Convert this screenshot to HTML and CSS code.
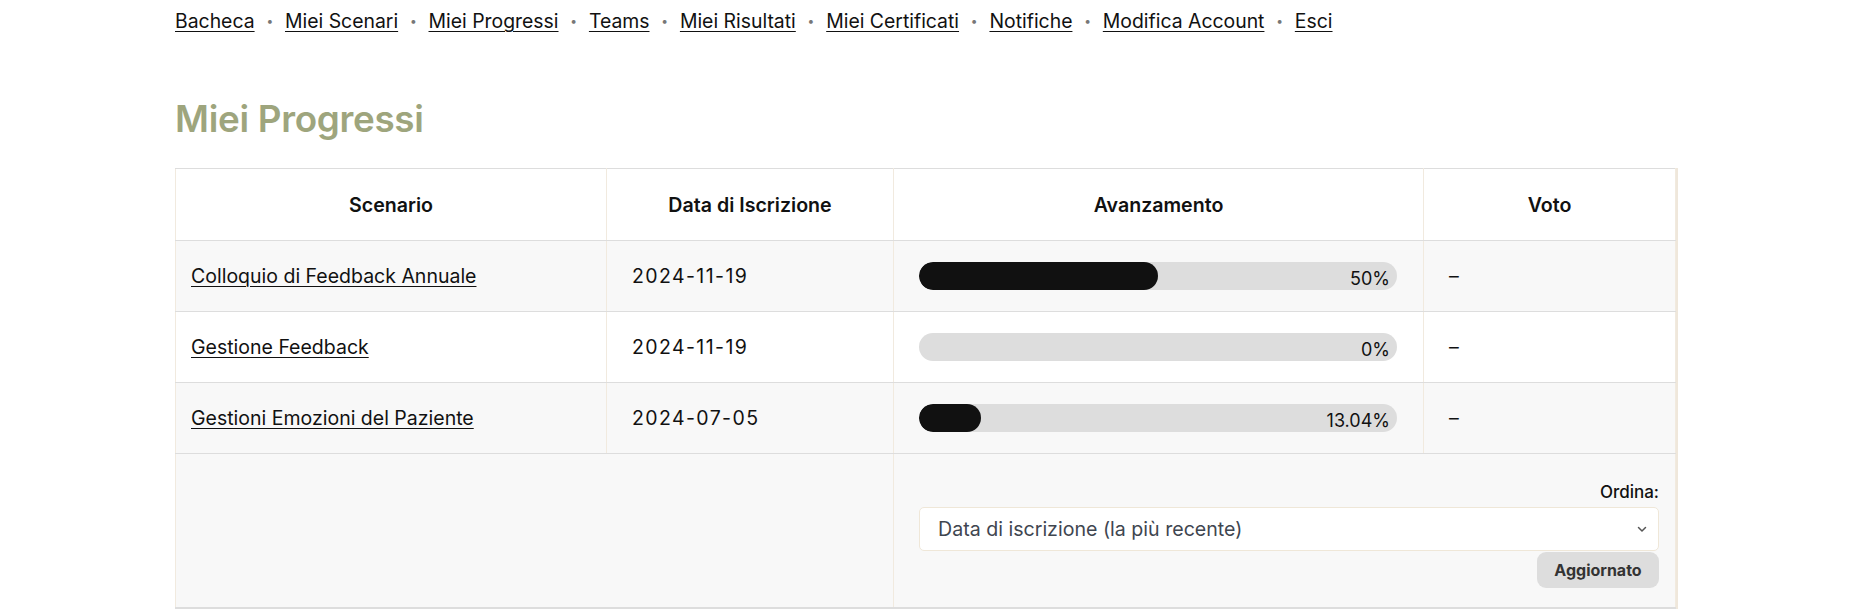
FILE: index.html
```html
<!DOCTYPE html>
<html lang="it">
<head>
<meta charset="utf-8">
<title>Miei Progressi</title>
<link rel="stylesheet" href="styles.css">
</head>
<body>
<div class="page">
  <nav class="topnav">
    <a href="#">Bacheca</a><span class="sep">•</span>
    <a href="#">Miei Scenari</a><span class="sep">•</span>
    <a href="#">Miei Progressi</a><span class="sep">•</span>
    <a href="#">Teams</a><span class="sep">•</span>
    <a href="#">Miei Risultati</a><span class="sep">•</span>
    <a href="#">Miei Certificati</a><span class="sep">•</span>
    <a href="#">Notifiche</a><span class="sep">•</span>
    <a href="#">Modifica Account</a><span class="sep">•</span>
    <a href="#">Esci</a>
  </nav>

  <h1 class="title">Miei Progressi</h1>

  <table class="progress-table">
    <colgroup>
      <col class="c-scenario">
      <col class="c-date">
      <col class="c-progress">
      <col class="c-vote">
    </colgroup>
    <thead>
      <tr>
        <th>Scenario</th>
        <th>Data di Iscrizione</th>
        <th>Avanzamento</th>
        <th>Voto</th>
      </tr>
    </thead>
    <tbody>
      <tr class="odd">
        <td class="cell-name"><a href="#">Colloquio di Feedback Annuale</a></td>
        <td class="cell-pad cell-date">2024-11-19</td>
        <td class="cell-pad">
          <div class="bar"><div class="fill" style="width:50%"></div><span class="pct">50%</span></div>
        </td>
        <td class="cell-pad">–</td>
      </tr>
      <tr>
        <td class="cell-name"><a href="#">Gestione Feedback</a></td>
        <td class="cell-pad cell-date">2024-11-19</td>
        <td class="cell-pad">
          <div class="bar"><div class="fill" style="width:0%"></div><span class="pct">0%</span></div>
        </td>
        <td class="cell-pad">–</td>
      </tr>
      <tr class="odd">
        <td class="cell-name"><a href="#">Gestioni Emozioni del Paziente</a></td>
        <td class="cell-pad cell-date">2024-07-05</td>
        <td class="cell-pad">
          <div class="bar"><div class="fill" style="width:13.04%"></div><span class="pct">13.04%</span></div>
        </td>
        <td class="cell-pad">–</td>
      </tr>
    </tbody>
    <tfoot>
      <tr class="odd">
        <td colspan="2"></td>
        <td colspan="2" class="cell-sort">
          <form class="sort-form">
            <label class="sort-label" for="ordina">Ordina:</label>
            <div class="select-wrap">
              <select id="ordina" class="sort-select">
                <option>Data di iscrizione (la più recente)</option>
                <option>Data di iscrizione (la meno recente)</option>
              </select>
              <svg class="chev" width="10" height="7" viewBox="0 0 10 7" aria-hidden="true"><path d="M1.5 1.5 L5 5 L8.5 1.5" fill="none" stroke="#555" stroke-width="1.5" stroke-linecap="round" stroke-linejoin="round"/></svg>
            </div>
            <button type="button" class="btn">Aggiornato</button>
          </form>
        </td>
      </tr>
    </tfoot>
  </table>
</div>
</body>
</html>
```

FILE: styles.css
```css
* { box-sizing: border-box; }

html, body {
  margin: 0;
  padding: 0;
  background: #ffffff;
}

body {
  font-family: "Inter", "Liberation Sans", sans-serif;
  color: #111111;
}

.page {
  width: 1500px;
  margin: 0 auto;
}

.topnav {
  display: flex;
  align-items: center;
  padding-top: 9px;
  height: 33px;
  font-size: 19.4px;
  line-height: 24px;
}

.topnav a {
  color: #111111;
  text-decoration: underline;
  text-underline-offset: 3px;
  text-decoration-thickness: 1px;
}

.topnav .sep {
  color: #777777;
  font-size: 12px;
  width: 30.4px;
  text-align: center;
}

.title {
  margin: 64px 0 28px;
  font-size: 36.8px;
  line-height: 43px;
  font-weight: 600;
  color: #9ea57d;
  letter-spacing: -0.3px;
}

.progress-table {
  width: 1500px;
  table-layout: fixed;
  border-collapse: collapse;
  border: 1px solid #dddddd;
  box-shadow: 2px 0 0 #efe7db;
  font-size: 19.5px;
}

.c-scenario { width: 431px; }
.c-date { width: 287px; }
.c-progress { width: 530px; }
.c-vote { width: 252px; }

.progress-table th,
.progress-table td {
  border-left: 1px solid #f1eadf;
  border-right: 1px solid #f1eadf;
  border-top: 1px solid #dddddd;
  border-bottom: 1px solid #dddddd;
}

.progress-table th {
  height: 72px;
  font-weight: 600;
  font-size: 19.6px;
  text-align: center;
  color: #111111;
  background: #ffffff;
}

.progress-table tbody td {
  height: 71px;
  vertical-align: middle;
}

.progress-table tr.odd td {
  background: #f8f8f8;
}

.cell-name {
  padding: 0 15px;
}

.cell-name a {
  color: #111111;
  text-decoration: underline;
  text-underline-offset: 3px;
  text-decoration-thickness: 1px;
}

.cell-pad {
  padding: 0 26px 0 25px;
}

.cell-date {
  letter-spacing: 1.4px;
}

.bar {
  position: relative;
  height: 28px;
  border-radius: 14px;
  background: #dddddd;
  display: flex;
  justify-content: flex-end;
  align-items: flex-end;
  padding-right: 7px;
  overflow: hidden;
}

.fill {
  position: absolute;
  left: 0;
  top: 0;
  bottom: 0;
  background: #111111;
  border-radius: 14px;
}

.pct {
  position: relative;
  font-size: 18px;
  line-height: 22px;
  color: #111111;
}

.cell-sort {
  padding: 26px 16px 19px 25px;
  vertical-align: top;
}

.progress-table tfoot td {
  height: 153px;
  border-bottom: 2px solid #dddddd;
}

.sort-form {
  display: flex;
  flex-direction: column;
  align-items: flex-end;
}

.sort-label {
  font-size: 17px;
  font-weight: 500;
  line-height: 24px;
  color: #111111;
}

.select-wrap {
  position: relative;
  width: 100%;
  margin-top: 3px;
}

.sort-select {
  -webkit-appearance: none;
  appearance: none;
  width: 100%;
  height: 44px;
  padding: 0 40px 0 18px;
  border: 1px solid #efe7d8;
  border-radius: 5px;
  background: #ffffff;
  font-family: "Inter", "Liberation Sans", sans-serif;
  font-size: 19.6px;
  color: #3f4650;
}

.chev {
  position: absolute;
  right: 12px;
  top: 19px;
  pointer-events: none;
}

.btn {
  margin-top: 1px;
  width: 122px;
  height: 36px;
  border: none;
  border-radius: 9px;
  background: #dddddd;
  font-family: "Inter", "Liberation Sans", sans-serif;
  font-size: 16px;
  font-weight: 700;
  color: #333333;
}
```
